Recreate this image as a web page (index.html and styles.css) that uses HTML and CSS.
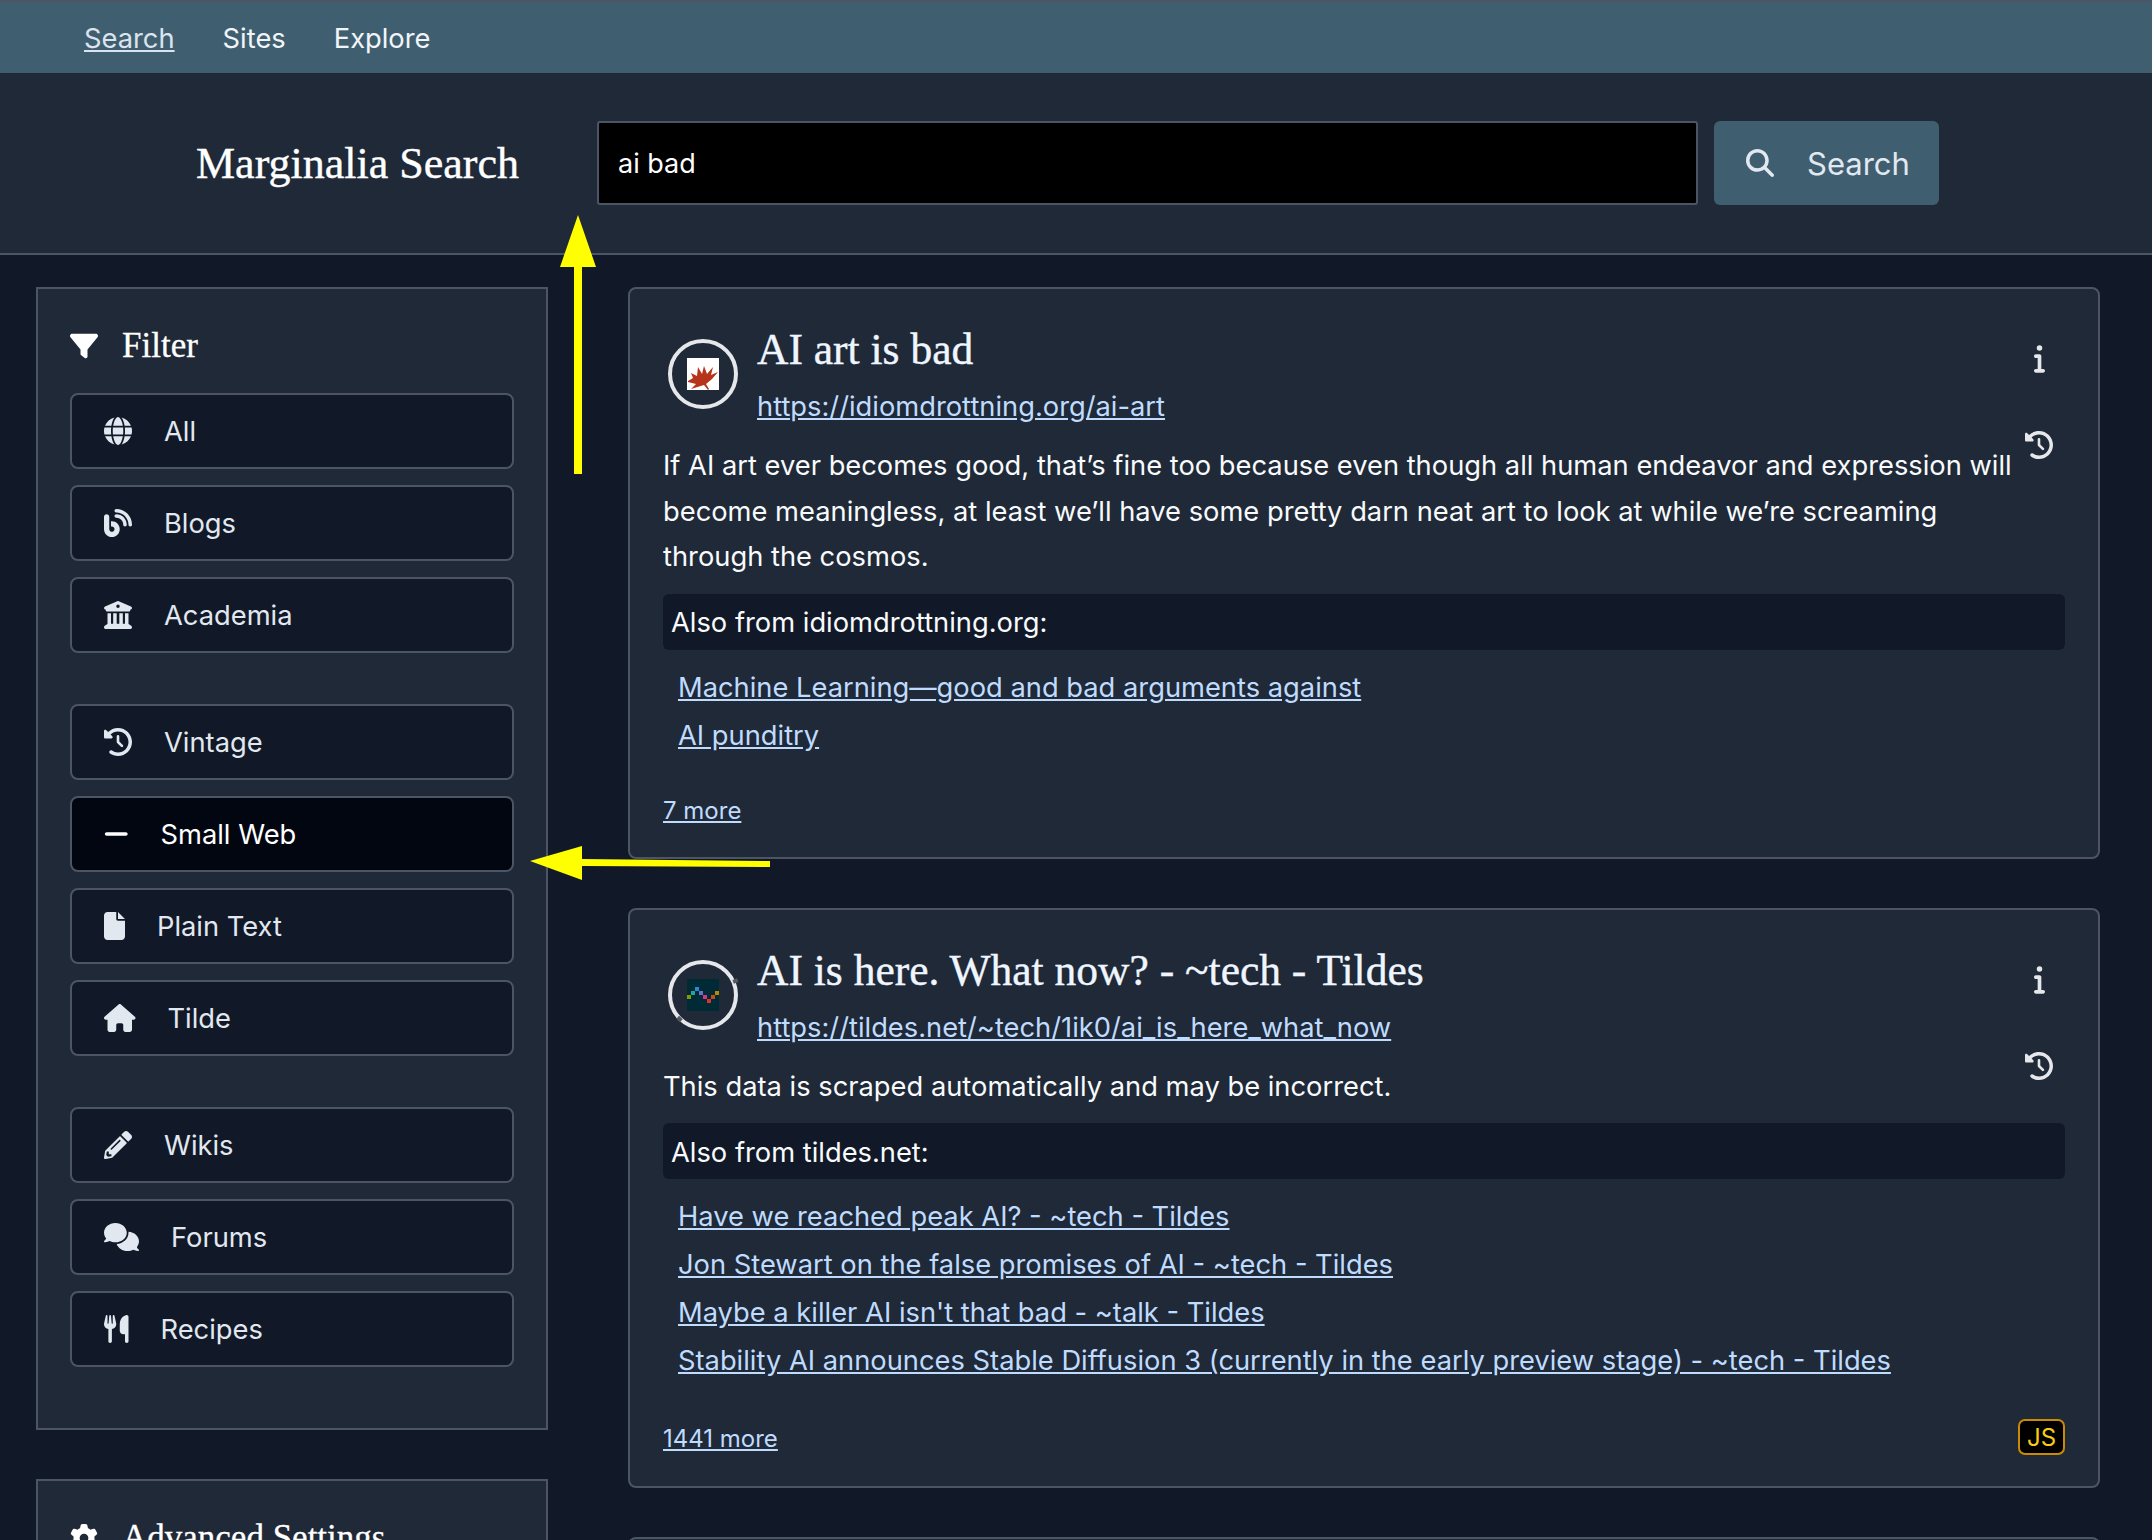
FILE: index.html
```html
<!DOCTYPE html>
<html lang="en">
<head>
    <meta charset="UTF-8">
    <meta name="viewport" content="width=device-width, initial-scale=1.0">
    <title>Marginalia Search</title>
    <link rel="stylesheet" href="styles.css">
</head>
<body>
    <svg width="0" height="0" class="defs">
        <symbol id="i-filter" viewBox="0 0 512 512"><path d="M3.9 54.9C10.5 40.9 24.5 32 40 32H472c15.5 0 29.5 8.9 36.1 22.9s4.6 30.5-5.2 42.5L320 320.9V448c0 12.1-6.8 23.2-17.7 28.6s-23.8 4.3-33.5-3l-64-48c-8.1-6-12.8-15.5-12.8-25.6V320.9L9 97.3C-.7 85.4-2.8 68.8 3.9 54.9z"/></symbol>
        <symbol id="i-search" viewBox="0 0 512 512"><path d="M416 208c0 45.9-14.9 88.3-40 122.7L502.6 457.4c12.5 12.5 12.5 32.8 0 45.3s-32.8 12.5-45.3 0L330.7 376c-34.4 25.2-76.8 40-122.7 40C93.1 416 0 322.9 0 208S93.1 0 208 0S416 93.1 416 208zM208 352a144 144 0 1 0 0-288 144 144 0 1 0 0 288z"/></symbol>
        <symbol id="i-history" viewBox="0 0 512 512"><path d="M75 75L41 41C25.9 25.9 0 36.6 0 57.9V168c0 13.3 10.7 24 24 24H134.1c21.4 0 32.1-25.9 17-41l-30.8-30.8C155 85.5 203 64 256 64c106 0 192 86 192 192s-86 192-192 192c-40.8 0-78.6-12.7-109.7-34.4c-14.5-10.1-34.4-6.6-44.6 7.9s-6.6 34.4 7.9 44.6C151.2 495 201.7 512 256 512c141.4 0 256-114.6 256-256S397.4 0 256 0C185.3 0 121.3 28.7 75 75zm181 53c-13.3 0-24 10.7-24 24V256c0 6.4 2.5 12.5 7 17l72 72c9.4 9.4 24.6 9.4 33.9 0s9.4-24.6 0-33.9l-65-65V152c0-13.3-10.7-24-24-24z"/></symbol>
        <symbol id="i-info" viewBox="0 0 192 512"><path d="M48 80a48 48 0 1 1 96 0A48 48 0 1 1 48 80zM0 224c0-17.7 14.3-32 32-32H96c17.7 0 32 14.3 32 32V448h32c17.7 0 32 14.3 32 32s-14.3 32-32 32H32c-17.7 0-32-14.3-32-32s14.3-32 32-32H64V256H32c-17.7 0-32-14.3-32-32z"/></symbol>
        <symbol id="i-gear" viewBox="0 0 512 512"><path d="M495.9 166.6c3.2 8.7 .5 18.4-6.4 24.6l-43.3 39.4c1.1 8.3 1.7 16.8 1.7 25.4s-.6 17.1-1.7 25.4l43.3 39.4c6.9 6.2 9.6 15.9 6.4 24.6c-4.4 11.9-9.7 23.3-15.8 34.3l-4.7 8.1c-6.6 11-14 21.4-22.1 31.2c-5.9 7.2-15.7 9.6-24.5 6.8l-55.7-17.7c-13.4 10.3-28.2 18.9-44 25.4l-12.5 57.1c-2 9.1-9 16.3-18.2 17.8c-13.8 2.3-28 3.5-42.5 3.5s-28.7-1.2-42.5-3.5c-9.2-1.5-16.2-8.7-18.2-17.8l-12.5-57.1c-15.8-6.5-30.6-15.1-44-25.4L83.1 425.9c-8.8 2.8-18.6 .3-24.5-6.8c-8.1-9.8-15.5-20.2-22.1-31.2l-4.7-8.1c-6.1-11-11.4-22.4-15.8-34.3c-3.2-8.7-.5-18.4 6.4-24.6l43.3-39.4C64.6 273.1 64 264.6 64 256s.6-17.1 1.7-25.4L22.4 191.2c-6.9-6.2-9.6-15.9-6.4-24.6c4.4-11.9 9.7-23.3 15.8-34.3l4.7-8.1c6.6-11 14-21.4 22.1-31.2c5.9-7.2 15.7-9.6 24.5-6.8l55.7 17.7c13.4-10.3 28.2-18.9 44-25.4l12.5-57.1c2-9.1 9-16.3 18.2-17.8C227.3 1.2 241.5 0 256 0s28.7 1.2 42.5 3.5c9.2 1.5 16.2 8.7 18.2 17.8l12.5 57.1c15.8 6.5 30.6 15.1 44 25.4l55.7-17.7c8.8-2.8 18.6-.3 24.5 6.8c8.1 9.8 15.5 20.2 22.1 31.2l4.7 8.1c6.1 11 11.4 22.4 15.8 34.3zM256 336a80 80 0 1 0 0-160 80 80 0 1 0 0 160z"/></symbol>
    </svg>

    <nav class="topnav">
        <a href="#" class="nav-link active">Search</a>
        <a href="#" class="nav-link">Sites</a>
        <a href="#" class="nav-link">Explore</a>
    </nav>

    <header class="search-head">
        <div class="logo">Marginalia Search</div>
        <input class="query" type="text" value="ai bad">
        <button class="search-btn">
            <svg class="search-ico"><use href="#i-search"/></svg>
            <span>Search</span>
        </button>
    </header>

    <div class="page">
        <aside class="side">
            <section class="panel">
                <h2 class="panel-title">
                    <svg class="panel-ico"><use href="#i-filter"/></svg>
                    Filter
                </h2>

                <div class="filter-group">
                    <a href="#" class="filter">
                        <svg class="ico" width="28" height="28" viewBox="0 0 512 512"><path d="M352 256c0 22.2-1.2 43.6-3.3 64H163.3c-2.2-20.4-3.3-41.8-3.3-64s1.2-43.6 3.3-64H348.7c2.2 20.4 3.3 41.8 3.3 64zm28.8-64H503.9c5.3 20.5 8.1 41.9 8.1 64s-2.8 43.5-8.1 64H380.8c2.1-20.6 3.2-42 3.2-64s-1.1-43.4-3.2-64zm112.6-32H376.7c-10-63.9-29.8-117.4-55.3-151.6c78.3 20.7 142 77.5 171.9 151.6zm-149.1 0H167.7c6.1-36.4 15.5-68.6 27-94.7c10.5-23.6 22.2-40.7 33.5-51.5C239.4 3.2 248.7 0 256 0s16.6 3.2 27.8 13.8c11.3 10.8 23 27.9 33.5 51.5c11.6 26 20.9 58.2 27 94.7zm-209 0H18.6C48.6 85.9 112.2 29.1 190.6 8.4C165.1 42.6 145.3 96.1 135.3 160zM8.1 192H131.2c-2.1 20.6-3.2 42-3.2 64s1.1 43.4 3.2 64H8.1C2.8 299.5 0 278.1 0 256s2.8-43.5 8.1-64zM194.7 446.6c-11.6-26-20.9-58.2-27-94.6H344.3c-6.1 36.4-15.5 68.6-27 94.6c-10.5 23.6-22.2 40.7-33.5 51.5C272.6 508.8 263.3 512 256 512s-16.6-3.2-27.8-13.8c-11.3-10.8-23-27.9-33.5-51.5zM135.3 352c10 63.9 29.8 117.4 55.3 151.6C112.2 482.9 48.6 426.1 18.6 352H135.3zm358.1 0c-30 74.1-93.6 130.9-171.9 151.6c25.5-34.2 45.2-87.7 55.3-151.6H493.4z"/></svg>
                        All
                    </a>
                    <a href="#" class="filter">
                        <svg class="ico" width="28" height="28" viewBox="0 0 512 512"><path d="M192 32c0 17.7 14.3 32 32 32c123.7 0 224 100.3 224 224c0 17.7 14.3 32 32 32s32-14.3 32-32C512 128.9 383.1 0 224 0c-17.7 0-32 14.3-32 32zm0 96c0 17.7 14.3 32 32 32c70.7 0 128 57.3 128 128c0 17.7 14.3 32 32 32s32-14.3 32-32c0-106-86-192-192-192c-17.7 0-32 14.3-32 32zM96 144c0-26.5-21.5-48-48-48S0 117.5 0 144V368c0 79.5 64.5 144 144 144s144-64.5 144-144s-64.5-144-144-144H128v96h16c26.5 0 48 21.5 48 48s-21.5 48-48 48s-48-21.5-48-48V144z"/></svg>
                        Blogs
                    </a>
                    <a href="#" class="filter">
                        <svg class="ico" width="28" height="28" viewBox="0 0 512 512"><path d="M243.4 2.6l-224 96c-14 6-21.8 21-18.7 35.8S16.8 160 32 160v8c0 13.3 10.7 24 24 24H456c13.3 0 24-10.7 24-24v-8c15.2 0 28.3-10.7 31.3-25.6s-4.8-29.9-18.7-35.8l-224-96c-8-3.4-17.2-3.4-25.2 0zM128 224H64V420.3c-.6 .3-1.2 .7-1.8 1.1l-48 32c-11.7 7.8-17 22.4-12.9 35.9S17.9 512 32 512H480c14.1 0 26.5-9.2 30.6-22.7s-1.1-28.1-12.9-35.9l-48-32c-.6-.4-1.2-.7-1.8-1.1V224H384V416H344V224H280V416H232V224H168V416H128V224zM256 64a32 32 0 1 1 0 64 32 32 0 1 1 0-64z"/></svg>
                        Academia
                    </a>
                </div>

                <div class="filter-group">
                    <a href="#" class="filter">
                        <svg class="ico" width="28" height="28"><use href="#i-history"/></svg>
                        Vintage
                    </a>
                    <a href="#" class="filter selected">
                        <svg class="ico" width="24.5" height="28" viewBox="0 0 448 512"><path d="M432 256c0 17.7-14.3 32-32 32L48 288c-17.7 0-32-14.3-32-32s14.3-32 32-32l352 0c17.7 0 32 14.3 32 32z"/></svg>
                        Small Web
                    </a>
                    <a href="#" class="filter">
                        <svg class="ico" width="21" height="28" viewBox="0 0 384 512"><path d="M0 64C0 28.7 28.7 0 64 0H224V128c0 17.7 14.3 32 32 32H384V448c0 35.3-28.7 64-64 64H64c-35.3 0-64-28.7-64-64V64zm384 64H256V0L384 128z"/></svg>
                        Plain Text
                    </a>
                    <a href="#" class="filter">
                        <svg class="ico" width="31.5" height="28" viewBox="0 0 576 512"><path d="M575.8 255.5c0 18-15 32.1-32 32.1h-32l.7 160.2c0 2.7-.2 5.4-.5 8.1V472c0 22.1-17.9 40-40 40H456c-1.1 0-2.2 0-3.3-.1c-1.4 .1-2.8 .1-4.2 .1H416 392c-22.1 0-40-17.9-40-40V448 384c0-17.7-14.3-32-32-32H256c-17.7 0-32 14.3-32 32v64 24c0 22.1-17.9 40-40 40H160 128.1c-1.5 0-3-.1-4.5-.2c-1.2 .1-2.4 .2-3.6 .2H104c-22.1 0-40-17.9-40-40V360c0-.9 0-1.9 .1-2.8V287.6H32c-18 0-32-14-32-32.1c0-9 3-17 10-24L266.4 8c7-7 15-8 22-8s15 2 21 7L564.8 231.5c8 7 12 15 11 24z"/></svg>
                        Tilde
                    </a>
                </div>

                <div class="filter-group">
                    <a href="#" class="filter">
                        <svg class="ico" width="28" height="28" viewBox="0 0 512 512"><path d="M497.9 142.1l-46.1 46.1c-4.7 4.7-12.3 4.7-17 0l-111-111c-4.7-4.7-4.7-12.3 0-17l46.1-46.1c18.7-18.7 49.1-18.7 67.9 0l60.1 60.1c18.8 18.7 18.8 49.1 0 67.9zM284.2 99.8L21.6 362.4.4 483.9c-2.9 16.4 11.4 30.6 27.8 27.8l121.5-21.3 262.6-262.6c4.7-4.7 4.7-12.3 0-17l-111-111c-4.8-4.7-12.4-4.7-17.1 0zM124.1 339.9c-5.5-5.5-5.5-14.3 0-19.8l154-154c5.5-5.5 14.3-5.5 19.8 0s5.5 14.3 0 19.8l-154 154c-5.5 5.5-14.3 5.5-19.8 0zM88 424h48v36.3l-64.5 11.3-31.1-31.1L51.7 376H88v48z"/></svg>
                        Wikis
                    </a>
                    <a href="#" class="filter">
                        <svg class="ico" width="35" height="28" viewBox="0 0 640 512"><path d="M208 352c114.9 0 208-78.8 208-176S322.9 0 208 0S0 78.8 0 176c0 38.6 14.7 74.3 39.6 103.4c-3.5 9.4-8.7 17.7-14.2 24.7c-4.8 6.2-9.7 11-13.3 14.3c-1.8 1.6-3.3 2.9-4.3 3.7c-.5 .4-.9 .7-1.1 .8l-.2 .2 0 0 0 0C1 327.2-1.4 334.4 .8 340.9S9.1 352 16 352c21.8 0 43.8-5.6 62.1-12.5c9.2-3.5 17.8-7.4 25.3-11.4C134.1 343.3 169.8 352 208 352zM448 176c0 112.3-99.1 196.9-216.5 207C255.8 457.4 336.4 512 432 512c38.2 0 73.9-8.7 104.7-23.9c7.5 4 16 7.9 25.2 11.4c18.3 6.9 40.3 12.5 62.1 12.5c6.9 0 13.1-4.5 15.2-11.1c2.1-6.6-.2-13.8-5.8-17.9l0 0 0 0-.2-.2c-.2-.2-.6-.4-1.1-.8c-1-.8-2.5-2-4.3-3.7c-3.6-3.3-8.5-8.1-13.3-14.3c-5.5-7-10.7-15.4-14.2-24.7c24.9-29 39.6-64.7 39.6-103.4c0-92.8-84.9-168.9-192.6-175.5c.4 5.1 .6 10.3 .6 15.5z"/></svg>
                        Forums
                    </a>
                    <a href="#" class="filter">
                        <svg class="ico" width="24.5" height="28" viewBox="0 0 448 512"><path d="M416 0C400 0 288 32 288 176V288c0 35.3 28.7 64 64 64h32V480c0 17.7 14.3 32 32 32s32-14.3 32-32V352 240 32c0-17.7-14.3-32-32-32zM64 16C64 7.8 57.9 1 49.7 .1S34.2 4.6 32.4 12.5L2.1 148.8C.7 155.1 0 161.5 0 167.9c0 45.9 35.1 83.6 80 87.7V480c0 17.7 14.3 32 32 32s32-14.3 32-32V255.6c44.9-4.1 80-41.8 80-87.7c0-6.4-.7-12.8-2.1-19.1L191.6 12.5c-1.8-8-9.3-13.3-17.4-12.4S160 7.8 160 16V150.2c0 5.4-4.4 9.8-9.8 9.8c-5.1 0-9.3-3.9-9.8-9L127.9 14.6C127.2 6.3 120.3 0 112 0s-15.2 6.3-15.9 14.6L83.7 151c-.5 5.1-4.7 9-9.8 9c-5.4 0-9.8-4.4-9.8-9.8V16z"/></svg>
                        Recipes
                    </a>
                </div>
            </section>

            <section class="panel">
                <h2 class="panel-title">
                    <svg class="panel-ico"><use href="#i-gear"/></svg>
                    Advanced Settings
                </h2>
            </section>
        </aside>

        <main class="results">
            <article class="card">
                <div class="card-top">
                    <div class="card-main">
                        <div class="card-head">
                            <div class="favicon">
                                <svg class="fav-img" viewBox="0 0 32 32">
                                    <rect width="32" height="32" fill="#fff"/>
                                    <polygon fill="#b5341a" points="1,23 6,20 4,15 10,18 11,9 15,16 17,8 20,16 26,9 24,17 31,14 25,21 19,26 22,31 21,32 17,27 4,31 9,26 1,24"/>
                                </svg>
                            </div>
                            <div class="card-titles">
                                <h2 class="card-title">AI art is bad</h2>
                                <a href="#" class="card-url">https://idiomdrottning.org/ai-art</a>
                            </div>
                        </div>
                        <p class="card-desc">If AI art ever becomes good, that’s fine too because even though all human endeavor and expression will become meaningless, at least we’ll have some pretty darn neat art to look at while we’re screaming through the cosmos.</p>
                    </div>
                    <div class="card-actions">
                        <svg class="act-info"><use href="#i-info"/></svg>
                        <svg class="act-hist"><use href="#i-history"/></svg>
                    </div>
                </div>
                <div class="also">Also from idiomdrottning.org:</div>
                <ul class="also-list">
                    <li><a href="#">Machine Learning—good and bad arguments against</a></li>
                    <li><a href="#">AI punditry</a></li>
                </ul>
                <div class="card-foot">
                    <a href="#" class="more">7 more</a>
                </div>
            </article>

            <article class="card">
                <div class="card-top">
                    <div class="card-main">
                        <div class="card-head">
                            <div class="favicon notched">
                                <svg class="fav-img" viewBox="0 0 8 8">
                                    <rect width="8" height="8" fill="#002b36"/>
                                    <rect x="0" y="4" width="1" height="1" fill="#859900"/>
                                    <rect x="1" y="3" width="1" height="1" fill="#2aa198"/>
                                    <rect x="2" y="2" width="1" height="1" fill="#268bd2"/>
                                    <rect x="3" y="3" width="1" height="1" fill="#6c71c4"/>
                                    <rect x="4" y="4" width="1" height="1" fill="#d33682"/>
                                    <rect x="5" y="5" width="1" height="1" fill="#dc322f"/>
                                    <rect x="6" y="4" width="1" height="1" fill="#cb4b16"/>
                                    <rect x="7" y="3" width="1" height="1" fill="#b58900"/>
                                </svg>
                            </div>
                            <div class="card-titles">
                                <h2 class="card-title">AI is here. What now? - ~tech - Tildes</h2>
                                <a href="#" class="card-url">https://tildes.net/~tech/1ik0/ai_is_here_what_now</a>
                            </div>
                        </div>
                        <p class="card-desc">This data is scraped automatically and may be incorrect.</p>
                    </div>
                    <div class="card-actions">
                        <svg class="act-info"><use href="#i-info"/></svg>
                        <svg class="act-hist"><use href="#i-history"/></svg>
                    </div>
                </div>
                <div class="also">Also from tildes.net:</div>
                <ul class="also-list">
                    <li><a href="#">Have we reached peak AI? - ~tech - Tildes</a></li>
                    <li><a href="#">Jon Stewart on the false promises of AI - ~tech - Tildes</a></li>
                    <li><a href="#">Maybe a killer AI isn't that bad - ~talk - Tildes</a></li>
                    <li><a href="#">Stability AI announces Stable Diffusion 3 (currently in the early preview stage) - ~tech - Tildes</a></li>
                </ul>
                <div class="card-foot">
                    <a href="#" class="more">1441 more</a>
                    <span class="js-badge">JS</span>
                </div>
            </article>

            <article class="card card-next"></article>
        </main>
    </div>

    <!-- yellow annotation arrows drawn over the screenshot -->
    <svg class="arrows" width="2152" height="1540" viewBox="0 0 2152 1540">
        <polygon fill="#ffff00" points="578,215 596,267 582,267 582,474 574,474 574,267 560,267"/>
        <polygon fill="#ffff00" points="530,861 582,846 582,859 770,861 770,867 582,866 582,880"/>
    </svg>
</body>
</html>
```

FILE: styles.css
```css
*{
    box-sizing: border-box;
    padding: 0;
    margin: 0;
}
html,body{
    height: 1540px;
    overflow: hidden;
}
body{
    position: relative;
    background-color: #111827;
    color: #e2e8f0;
    font-family: "Inter", "Liberation Sans", sans-serif;
    font-size: 27.3px;
}
.defs{
    position: absolute;
}
svg{
    fill: currentColor;
    flex: none;
}

/* top bar */
.topnav{
    height: 73px;
    background-color: #3f5f70;
    border-top: 2px solid #4b5563;
    display: flex;
    align-items: center;
    gap: 48px;
    padding-left: 84px;
    padding-top: 1px;
}
.nav-link{
    color: #f1f5f9;
    text-decoration: none;
}
.nav-link.active{
    color: #dbe4ee;
    text-decoration: underline;
}

/* search row */
.search-head{
    height: 182px;
    background-color: #1f2937;
    border-bottom: 2px solid #4b5563;
    display: flex;
    align-items: center;
    padding-left: 196px;
}
.logo{
    width: 401px;
    font-family: "Liberation Serif", serif;
    font-size: 44px;
    -webkit-text-stroke: 0.4px #fff;
    color: #fff;
}
.query{
    width: 1101px;
    height: 84px;
    background-color: #000;
    border: 2px solid #4b5563;
    border-radius: 3px;
    color: #fff;
    font-family: inherit;
    font-size: 27px;
    padding: 0 19px;
}
.search-btn{
    width: 225px;
    height: 84px;
    margin-left: 16px;
    background-color: #3f5f70;
    border: 0;
    border-radius: 6px;
    color: #e2e8f0;
    font-family: inherit;
    font-size: 31px;
    display: flex;
    align-items: center;
    padding-left: 32px;
    gap: 33px;
}
.search-ico{
    width: 28px;
    height: 28px;
}

.page{
    display: flex;
    gap: 80px;
    padding: 32px 52px 0 36px;
}

/* sidebar */
.side{
    width: 512px;
    display: flex;
    flex-direction: column;
    gap: 49px;
}
.panel{
    background-color: #1f2937;
    border: 2px solid #4b5563;
    padding: 37px 32px 20px;
    height: 1143px;
}
.panel + .panel{
    height: 300px;
}
.panel-title{
    display: flex;
    align-items: center;
    gap: 24px;
    font-family: "Liberation Serif", serif;
    font-weight: 400;
    font-size: 35px;
    -webkit-text-stroke: 0.3px #fff;
    color: #fff;
    margin-bottom: 27px;
}
.panel-ico{
    width: 28px;
    height: 28px;
}
.filter-group{
    display: flex;
    flex-direction: column;
    gap: 16px;
    margin-bottom: 51px;
}
.filter{
    height: 76px;
    display: flex;
    align-items: center;
    gap: 32px;
    padding-left: 32px;
    background-color: #111827;
    border: 2px solid #4b5563;
    border-radius: 8px;
    color: #e2e8f0;
    text-decoration: none;
}
.filter.selected{
    background-color: #020611;
    color: #fff;
}

/* results */
.results{
    width: 1472px;
    display: flex;
    flex-direction: column;
    gap: 49px;
}
.card{
    background-color: #1f2937;
    border: 2px solid #4b5563;
    border-radius: 8px;
    padding: 33px 33px 0;
}
.card-top{
    display: flex;
}
.card-main{
    flex: 1;
}
.card-head{
    display: flex;
    gap: 19px;
}
.favicon{
    position: relative;
    width: 70px;
    height: 70px;
    margin: 17px 0 0 5px;
    border: 4px solid #e5e7eb;
    border-radius: 50%;
    display: flex;
    align-items: center;
    justify-content: center;
}
/* the tildes ring has two small gaps in it */
.favicon.notched::before,
.favicon.notched::after{
    content: "";
    position: absolute;
    width: 5px;
    height: 4px;
    background-color: #55595f;
}
.favicon.notched::before{
    top: 15px;
    right: -4px;
    transform: rotate(-20deg);
}
.favicon.notched::after{
    bottom: 5px;
    left: 5px;
    transform: rotate(45deg);
}
.fav-img{
    width: 32px;
    height: 32px;
}
.card-title{
    font-family: "Liberation Serif", serif;
    font-weight: 400;
    font-size: 43.5px;
    line-height: 54px;
    -webkit-text-stroke: 0.4px #eff6ff;
    color: #eff6ff;
}
.card-url{
    display: block;
    margin-top: 8px;
    color: #bfdbfe;
    line-height: 46px;
}
.card-desc{
    color: #f8fafc;
    line-height: 45.5px;
    margin-top: 13px;
}
.card-actions{
    width: 52px;
    display: flex;
    flex-direction: column;
    align-items: center;
    padding-top: 21px;
    gap: 58px;
    color: #e5e7eb;
}
.act-info{
    width: 11px;
    height: 30px;
}
.act-hist{
    width: 28px;
    height: 28px;
}
.also{
    background-color: #111827;
    border-radius: 6px;
    height: 56px;
    margin-top: 14px;
    padding-left: 8px;
    padding-top: 2px;
    display: flex;
    align-items: center;
    color: #f8fafc;
}
.also-list{
    list-style: none;
    margin-top: 14px;
    padding-left: 15px;
}
.also-list li{
    line-height: 48px;
}
.also-list a, .more{
    color: #bfdbfe;
}
.card-foot{
    display: flex;
    justify-content: space-between;
    align-items: center;
    min-height: 48px;
    margin-top: 27px;
    margin-bottom: 22px;
}
.more{
    font-size: 24px;
}
.js-badge{
    width: 47px;
    height: 36px;
    margin: 7px 0 9px;
    background-color: #000;
    border: 2px solid #ca8a04;
    border-radius: 7px;
    color: #facc15;
    font-size: 24px;
    display: flex;
    align-items: center;
    justify-content: center;
}
.card-next{
    height: 100px;
}

.arrows{
    position: absolute;
    top: 0;
    left: 0;
    pointer-events: none;
}
```
